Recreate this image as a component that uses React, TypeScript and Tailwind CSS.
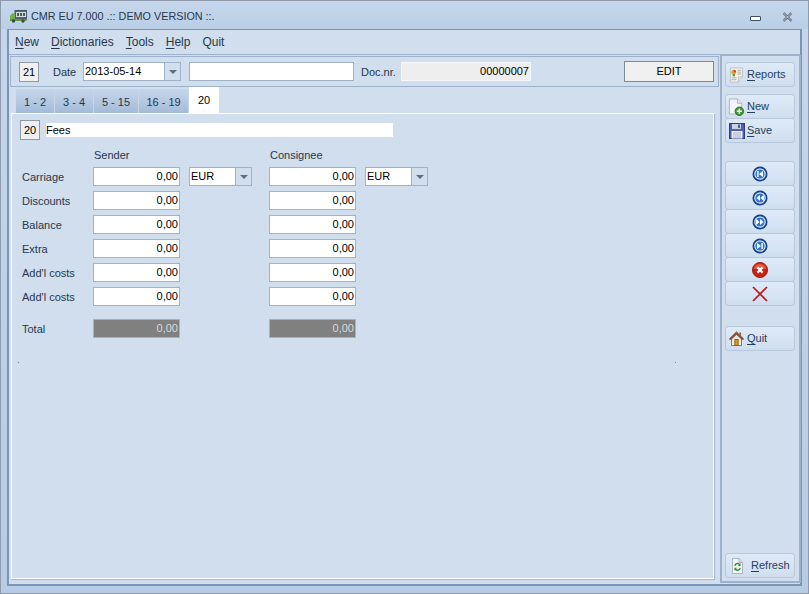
import { FC, ReactNode } from 'react';

const Truck = () => (
  <svg width="17" height="13" viewBox="0 0 17 13">
    <rect x="5" y="0.5" width="11.5" height="8.5" fill="#59666f" stroke="#4a565e" />
    <rect x="6" y="2" width="10" height="5" fill="#d8dde2" />
    <path d="M7 3 H9 V6 H7 Z M10 3 H12 V6 H10 Z M13 3 H15 V6 H13 Z" fill="#4a565e" />
    <path d="M0 6 L2 3.5 H5 V10 H0 Z" fill="#6fae4c" />
    <rect x="0" y="9" width="16.5" height="2" fill="#5f9a3f" />
    <circle cx="3.5" cy="11" r="1.7" fill="#3f4b3a" />
    <circle cx="13" cy="11" r="1.7" fill="#3f4b3a" />
  </svg>
);

const ReportsIcon = () => (
  <svg width="18" height="18" viewBox="0 0 18 18">
    <path d="M2.5 1.5 H15.5 V11 L11 16.5 H2.5 Z" fill="#f6f3e6" stroke="#b9c0c8" />
    <path d="M11 16.5 V11 H15.5" fill="#e2e0d2" stroke="#b9c0c8" />
    <circle cx="6" cy="6" r="2.6" fill="#e0a63a" />
    <path d="M6 6 V3.4 A2.6 2.6 0 0 1 8.6 6 Z" fill="#c8402c" />
    <rect x="5" y="8" width="2.4" height="2.4" fill="#5b9a3c" />
    <path d="M10 4 H14 M10 6 H14 M10 8 H14 M4 12 H9 M4 14 H9" stroke="#a4acb6" />
  </svg>
);

const NewIcon = () => (
  <svg width="18" height="20" viewBox="0 0 18 20">
    <path d="M1.5 1.5 H10 L14.5 6 V17.5 H1.5 Z" fill="#f2f4f7" stroke="#a9b2bd" />
    <path d="M10 1.5 V6 H14.5" fill="#dfe4ea" stroke="#a9b2bd" />
    <circle cx="12" cy="14.5" r="4.5" fill="#3e9a35" stroke="#27701f" />
    <path d="M12 11.8 V17.2 M9.3 14.5 H14.7" stroke="#fff" strokeWidth="1.6" />
  </svg>
);

const SaveIcon = () => (
  <svg width="16" height="16" viewBox="0 0 16 16">
    <rect x="0.5" y="0.5" width="15" height="15" fill="#4c5fb0" stroke="#2e3c86" />
    <rect x="3" y="1" width="9" height="5" fill="#c8d0e6" />
    <rect x="9" y="1.5" width="2" height="3.5" fill="#4c5fb0" />
    <rect x="2.5" y="8" width="11" height="7.5" fill="#eef0f6" />
    <path d="M4 10 H12 M4 12 H12 M4 14 H12" stroke="#a7aec8" />
  </svg>
);

const NavIcon: FC<{ kind: 'first' | 'prev' | 'next' | 'last' }> = ({ kind }) => (
  <svg width="16" height="16" viewBox="0 0 16 16">
    <circle cx="8" cy="8" r="7.5" fill="#123f8a" />
    <circle cx="8" cy="8" r="5.8" fill="#d5e6f6" />
    <circle cx="8" cy="8" r="4.6" fill="#2f78c6" />
    {kind === 'first' && <path d="M5.2 5 H6.6 V11 H5.2 Z M11 5 V11 L7 8 Z" fill="#fff" />}
    {kind === 'prev' && <path d="M8 5 V11 L4.5 8 Z M12 5 V11 L8.5 8 Z" fill="#fff" />}
    {kind === 'next' && <path d="M8 5 V11 L11.5 8 Z M4 5 V11 L7.5 8 Z" fill="#fff" />}
    {kind === 'last' && <path d="M9.4 5 H10.8 V11 H9.4 Z M5 5 V11 L9 8 Z" fill="#fff" />}
  </svg>
);

const CancelIcon = () => (
  <svg width="16" height="16" viewBox="0 0 16 16">
    <circle cx="8" cy="8" r="7.6" fill="#c9220f" stroke="#8f1408" strokeWidth="0.8" />
    <path d="M2 7 A6 5 0 0 1 14 7 Z" fill="#e8553f" />
    <path d="M5.4 5.4 L10.6 10.6 M10.6 5.4 L5.4 10.6" stroke="#fff" strokeWidth="2.2" />
  </svg>
);

const CrossIcon = () => (
  <svg width="16" height="16" viewBox="0 0 16 16">
    <path d="M1 1 L15 15 M15 1 L1 15" stroke="#c01818" strokeWidth="1.7" />
  </svg>
);

const HomeIcon = () => (
  <svg width="15" height="15" viewBox="0 0 18 16" preserveAspectRatio="none">
    <path d="M3 8 V15.5 H15 V8" fill="#f4ecd2" stroke="#7d6a45" />
    <path d="M0.5 8.5 L9 1 L17.5 8.5 L15.5 8.8 L9 3.5 L2.5 8.8 Z" fill="#b0462a" stroke="#6b3a22" />
    <rect x="12.5" y="1.5" width="2" height="4" fill="#8f6a3f" />
    <rect x="7" y="9" width="4" height="6.5" fill="#d99a1f" stroke="#7d5a1a" />
  </svg>
);

const RefreshIcon = () => (
  <svg width="11" height="16" viewBox="0 0 14 18" preserveAspectRatio="none">
    <path d="M0.5 0.5 H9 L13.5 5 V17.5 H0.5 Z" fill="#f3f5f6" stroke="#9aa6b2" />
    <path d="M9 0.5 V5 H13.5" fill="#dfe4ea" stroke="#9aa6b2" />
    <path d="M3.5 9 A3.5 3.5 0 0 1 10 8 M10.5 11 A3.5 3.5 0 0 1 4 12" fill="none" stroke="#2f8f2c" strokeWidth="1.6" />
    <path d="M10.8 5.6 V9 H7.6 Z M3.2 14.4 V11 H6.4 Z" fill="#2f8f2c" />
  </svg>
);

const Mnemonic: FC<{ first: string; rest: string }> = ({ first, rest }) => (
  <>
    <span className="underline underline-offset-2">{first}</span>
    {rest}
  </>
);

const SideButton: FC<{ icon: ReactNode; first?: string; rest?: string; className?: string }> = ({ icon, first, rest, className }) => (
  <div
    className={`w-[70px] h-[25px] shrink-0 flex items-center rounded-[3px] border border-[#b7c8dd] bg-gradient-to-b from-[#dfeaf7] to-[#cfdeef] text-[#24405c] ${first ? 'justify-start' : 'justify-center'} ${className ?? ''}`}
  >
    <div className="w-[17px] flex justify-center shrink-0">{icon}</div>
    {first && (
      <span>
        <Mnemonic first={first} rest={rest ?? ''} />
      </span>
    )}
  </div>
);

const Arrow = () => <div className="w-0 h-0 border-x-[4px] border-x-transparent border-t-[4px] border-t-[#5d6f86]" />;

const Combo: FC<{ value: string; className?: string }> = ({ value, className }) => (
  <div className={`w-[63px] h-[19px] flex border border-[#9fb2c9] bg-white ${className ?? ''}`}>
    <div className="flex-1 pl-[1px] leading-[17px] text-black">{value}</div>
    <div className="w-[16px] bg-[#d0deee] border-l border-[#9fb2c9] flex items-center justify-center">
      <Arrow />
    </div>
  </div>
);

const Amount: FC<{ total?: boolean }> = ({ total }) => (
  <div
    className={`w-[87px] h-[19px] border border-[#9fb2c9] text-right pr-[1px] leading-[17px] ${total ? 'bg-[#808080] text-[#d8d8d8]' : 'bg-white text-black'}`}
  >
    0,00
  </div>
);

const rows = ['Carriage', 'Discounts', 'Balance', 'Extra', "Add'l costs", "Add'l costs"];
const tabs = ['1 - 2', '3 - 4', '5 - 15', '16 - 19'];
const tabWidths = ['w-[39px]', 'w-[39px]', 'w-[45px]', 'w-[50px]'];

export default function App() {
  return (
    <div
      className="w-[809px] h-[594px] flex flex-col bg-gradient-to-b from-[#c6d7ec] to-[#b6cbe4] border border-[#8f9baa] text-[11px] text-[#1e2a38] overflow-hidden"
      style={{ fontFamily: '"Liberation Sans", Arial, sans-serif' }}
    >
      {/* title bar */}
      <div className="h-[28px] shrink-0 flex items-center pl-[9px] pr-[15px] gap-[4px] pt-[3px] bg-gradient-to-b from-[#c6d7ec] to-[#b9cee6]">
        <Truck />
        <span className="text-[10.8px] text-[#26384d]">CMR EU 7.000 .:: DEMO VERSION ::.</span>
        <div className="ml-auto flex items-center gap-[21px] pt-[1px]">
          <div className="w-[11px] h-[5px] mt-[2px] rounded-[1px] border border-[#3f4f63] bg-white" />
          <svg width="11" height="10" viewBox="0 0 11 10">
            <path d="M1.5 1 L9.5 9 M9.5 1 L1.5 9" stroke="#3f4f63" strokeWidth="2.2" />
            <path d="M1.5 1 L9.5 9 M9.5 1 L1.5 9" stroke="#fff" strokeWidth="0.8" />
          </svg>
        </div>
      </div>

      <div className="mx-[6px] mb-[7px] flex-1 flex flex-col min-h-0 bg-[#d0deee] border-t border-l-2 border-r-2 border-b-2 border-[#7b95b5]">
        {/* menu */}
        <div className="h-[25px] shrink-0 flex items-center pl-[6px] gap-[12px] text-[12px] text-[#26384d] border-b border-[#9db1ca]">
          <span><Mnemonic first="N" rest="ew" /></span>
          <span><Mnemonic first="D" rest="ictionaries" /></span>
          <span><Mnemonic first="T" rest="ools" /></span>
          <span><Mnemonic first="H" rest="elp" /></span>
          <span>Quit</span>
        </div>

        <div className="flex-1 flex min-h-0 pl-[1px] pt-[1px]">
          {/* main column */}
          <div className="w-[709px] shrink-0 flex flex-col mr-[1px]">
            <div className="h-[31px] shrink-0 flex items-center border border-[#9db1ca] pl-[8px]">
              <div className="w-[20px] h-[20px] border border-[#8e9aa8] bg-[#f0f0f0] text-center leading-[18px] text-black">21</div>
              <span className="ml-[14px] w-[22px] pt-[1px] text-[#26384d]">Date</span>
              <div className="ml-[8px] w-[98px] h-[19px] flex border border-[#9fb2c9] bg-white">
                <div className="flex-1 pl-[1px] leading-[17px] text-black">2013-05-14</div>
                <div className="w-[16px] bg-[#d0deee] border-l border-[#9fb2c9] flex items-center justify-center">
                  <Arrow />
                </div>
              </div>
              <div className="ml-[8px] w-[165px] h-[19px] border border-[#9fb2c9] bg-white" />
              <span className="ml-[7px] w-[36px] pt-[1px] text-[#26384d]">Doc.nr.</span>
              <div className="ml-[4px] w-[130px] h-[19px] border border-[#f4f7fb] bg-[#eeeeee] text-right pr-[1px] leading-[17px] text-black">00000007</div>
              <div className="ml-[93px] w-[90px] h-[21px] border border-[#7d8a97] bg-[#f0f0f0] text-center leading-[19px] text-black">EDIT</div>
            </div>

            {/* tabs */}
            <div className="h-[26px] shrink-0 flex items-end pl-[6px]">
              {tabs.map((t, i) => (
                <div
                  key={t}
                  className={`${tabWidths[i]} h-[24px] border-r border-t border-[#c7d5e6] rounded-t-[2px] bg-gradient-to-b from-[#c5d6ea] to-[#a3bbd8] text-center leading-[24px] text-[#26384d]`}
                >
                  {t}
                </div>
              ))}
              <div className="w-[30px] h-[26px] bg-white text-center leading-[26px] text-black">20</div>
            </div>

            {/* tab page */}
            <div className="w-[703px] h-[466px] ml-[1px] shrink-0 flex flex-col border border-white bg-[#d0deee] shadow-[1px_1px_1px_#a9bbd2]">
              <div className="flex items-center pl-[8px] pt-[6px]">
                <div className="w-[20px] h-[20px] border border-[#8e9aa8] bg-[#f0f0f0] text-center leading-[18px] text-black">20</div>
                <div className="ml-[6px] w-[347px] h-[14px] bg-white leading-[14px] text-black">Fees</div>
              </div>

              <div className="flex pl-[82px] mt-[7px] h-[17px] leading-[17px] text-[#26384d]">
                <span className="w-[176px]">Sender</span>
                <span>Consignee</span>
              </div>

              <div className="mt-[3px] flex flex-col gap-[5px]">
                {rows.map((label, i) => (
                  <div key={i} className="flex items-center pl-[10px]">
                    <span className="w-[71px] pt-[2px] text-[#26384d]">{label}</span>
                    <Amount />
                    {i === 0 ? <Combo value="EUR" className="ml-[9px]" /> : <div className="w-[63px] ml-[9px]" />}
                    <div className="w-[17px]" />
                    <Amount />
                    {i === 0 && <Combo value="EUR" className="ml-[9px]" />}
                  </div>
                ))}
              </div>

              <div className="mt-[13px] flex items-center pl-[10px]">
                <span className="w-[71px] pt-[2px] text-[#26384d]">Total</span>
                <Amount total />
                <div className="w-[89px]" />
                <Amount total />
              </div>

              <div className="mt-[24px] ml-[6px] mr-[37px] flex justify-between">
                <div className="w-[1px] h-[1px] bg-[#7f8c9b]" />
                <div className="w-[1px] h-[1px] bg-[#7f8c9b]" />
              </div>
            </div>
          </div>

          {/* side column */}
          <div className="w-[81px] shrink-0 -mt-[1px] mb-[1px] flex flex-col border-l-2 border-r-2 border-b-2 border-t border-[#9db1ca] pl-[3px] pt-[6px]">
            <SideButton icon={<ReportsIcon />} first="R" rest="eports" className="pl-[2px] gap-[2px]" />
            <SideButton icon={<NewIcon />} first="N" rest="ew" className="mt-[7px] pl-[2px] gap-[2px]" />
            <SideButton icon={<SaveIcon />} first="S" rest="ave" className="-mt-[1px] pl-[2px] gap-[2px]" />
            <SideButton icon={<NavIcon kind="first" />} className="mt-[18px]" />
            <SideButton icon={<NavIcon kind="prev" />} className="-mt-[1px]" />
            <SideButton icon={<NavIcon kind="next" />} className="-mt-[1px]" />
            <SideButton icon={<NavIcon kind="last" />} className="-mt-[1px]" />
            <SideButton icon={<CancelIcon />} className="-mt-[1px]" />
            <SideButton icon={<CrossIcon />} className="-mt-[1px]" />
            <SideButton icon={<HomeIcon />} first="Q" rest="uit" className="mt-[20px] pl-[2px] gap-[2px]" />
            <SideButton icon={<RefreshIcon />} first="R" rest="efresh" className="mt-auto mb-[3px] pl-[3px] gap-[5px]" />
          </div>
        </div>
      </div>
    </div>
  );
}
